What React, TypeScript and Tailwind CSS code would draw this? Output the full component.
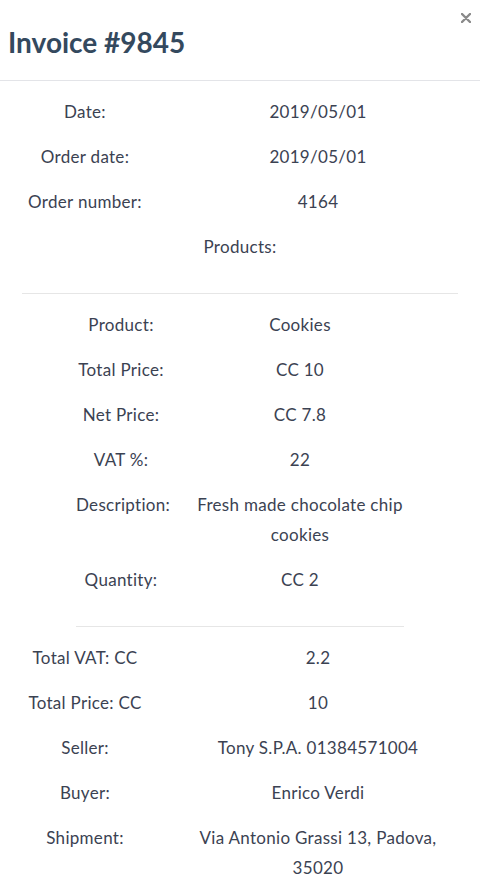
const info = [
  { label: 'Date:', value: '2019/05/01' },
  { label: 'Order date:', value: '2019/05/01' },
  { label: 'Order number:', value: '4164' },
];

const product = [
  { label: 'Product:', value: 'Cookies' },
  { label: 'Total Price:', value: 'CC 10' },
  { label: 'Net Price:', value: 'CC 7.8' },
  { label: 'VAT %:', value: '22' },
  { label: 'Description:', value: 'Fresh made chocolate chip cookies' },
  { label: 'Quantity:', value: 'CC 2' },
];

const totals = [
  { label: 'Total VAT: CC', value: '2.2' },
  { label: 'Total Price: CC', value: '10' },
  { label: 'Seller:', value: 'Tony S.P.A. 01384571004' },
  { label: 'Buyer:', value: 'Enrico Verdi' },
  { label: 'Shipment:', value: 'Via Antonio Grassi 13, Padova, 35020' },
];

function Cell({ children, span }: { children: React.ReactNode; span?: boolean }) {
  return (
    <div className={`px-[15px] py-[7.5px] text-center leading-[30px] ${span ? 'col-span-2' : ''}`}>
      {children}
    </div>
  );
}

function Rule() {
  return (
    <div className="col-span-2 px-[15px] pt-[23px] pb-[9px]">
      <div className="h-px bg-[#e6e6e6]" />
    </div>
  );
}

function Rows({ rows }: { rows: { label: string; value: string }[] }) {
  return (
    <>
      {rows.map((r) => (
        <div key={r.label} className="contents">
          <Cell>{r.label}</Cell>
          <Cell>{r.value}</Cell>
        </div>
      ))}
    </>
  );
}

export default function App() {
  return (
    <div
      className="w-[480px] min-h-[885px] bg-white text-[17px] text-[#3b4252]"
      style={{ fontFamily: 'Lato, "Noto Sans", sans-serif' }}
    >
      <div className="relative h-[81px] border-b border-[#e3e4e8] pl-[8px] pt-[25px]">
        <h1 className="text-[28px] font-bold leading-[34px] text-[#34495e]">Invoice #9845</h1>
        <button className="absolute right-[4px] top-[8px] flex h-[20px] w-[20px] items-center justify-center">
          <svg width="10" height="10" viewBox="0 0 10 10">
            <path d="M1 1L9 9M9 1L1 9" stroke="#8a8a8a" strokeWidth="2.4" strokeLinecap="round" />
          </svg>
        </button>
      </div>

      <div className="px-[7px] pt-[8.5px] tracking-[0.3px]">
        <div className="grid grid-cols-[156px_310px]">
          <Rows rows={info} />
          <Cell span>Products:</Cell>
          <Rule />
          <div className="col-span-2">
            <div className="mx-auto grid w-[358px] grid-cols-[120px_238px]">
              <Rows rows={product} />
              <Rule />
            </div>
          </div>
          <Rows rows={totals} />
        </div>
      </div>
    </div>
  );
}
